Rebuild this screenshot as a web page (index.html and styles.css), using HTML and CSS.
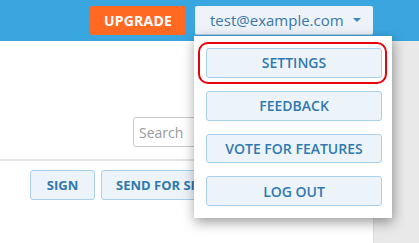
FILE: index.html
```html
<!DOCTYPE html>
<html>
<head>
<meta charset="utf-8">
<link rel="stylesheet" href="styles.css">
</head>
<body>
<header class="topbar">
  <button class="upgrade">UPGRADE</button>
  <button class="account">test@example.com <span class="caret"></span></button>
</header>
<div class="page">
  <main class="content">
    <div class="search-row">
      <input class="search" type="text" placeholder="Search">
    </div>
    <div class="toolbar">
      <button class="btn">SIGN</button>
      <button class="btn">SEND FOR SIGNATURE</button>
    </div>
  </main>
  <aside class="side"></aside>
</div>
<div class="menu">
  <div class="highlight"></div>
  <button class="btn menu-btn">SETTINGS</button>
  <button class="btn menu-btn">FEEDBACK</button>
  <button class="btn menu-btn">VOTE FOR FEATURES</button>
  <button class="btn menu-btn">LOG OUT</button>
</div>
</body>
</html>
```
FILE: styles.css
```css
* { box-sizing: border-box; }
html, body { margin: 0; padding: 0; }
body {
  width: 419px;
  height: 243px;
  overflow: hidden;
  background: #fff;
  font-family: "Open Sans", "Noto Sans", sans-serif;
  position: relative;
}
button { font-family: inherit; cursor: pointer; }

.topbar {
  height: 41px;
  background: #3aa6e0;
  display: flex;
  align-items: flex-start;
  justify-content: flex-end;
  padding: 6px 46px 0 0;
  gap: 9px;
}
.upgrade {
  width: 96px;
  height: 29px;
  background: #ff6922;
  color: #fff;
  border: none;
  border-radius: 2px;
  font-size: 14px;
  font-weight: 700;
  letter-spacing: 0.2px;
  padding: 0;
}
.account {
  width: 178px;
  height: 29px;
  background: #edf3f8;
  border: none;
  border-bottom: 1px solid #b9cfe0;
  border-radius: 2px;
  color: #3a76a8;
  font-size: 15px;
  text-align: left;
  padding: 0 0 0 15px;
  display: flex;
  align-items: center;
}
.caret {
  margin-left: auto;
  margin-right: 12px;
  width: 0;
  height: 0;
  border-left: 4px solid transparent;
  border-right: 4px solid transparent;
  border-top: 4px solid #3a86c4;
}

.page {
  display: flex;
  height: 202px;
}
.content {
  width: 373px;
  flex: none;
}
.side {
  flex: 1;
  background: #e9e9e9;
  border-left: 1px solid #dcdcdc;
}
.search-row {
  padding: 76px 0 0 133px;
  height: 120px;
  border-bottom: 2px solid #e4e4e4;
}
.search {
  width: 200px;
  height: 30px;
  border: 1px solid #c8c8c8;
  border-radius: 3px;
  padding: 0 5px;
  font-family: inherit;
  font-size: 14px;
  color: #555;
}
.search::placeholder { color: #9a9a9a; }
.toolbar {
  display: flex;
  gap: 6px;
  padding: 9px 0 0 30px;
}
.btn {
  height: 30px;
  background: #edf4f9;
  border: 1px solid #a9d0ec;
  border-radius: 3px;
  color: #3079b0;
  font-size: 13px;
  font-weight: 700;
  padding: 0 14px;
  white-space: nowrap;
}
.toolbar .btn:first-child { width: 65px; padding: 0; }

.menu {
  position: absolute;
  top: 36px;
  left: 194px;
  width: 198px;
  height: 182px;
  background: #fff;
  box-shadow: 1px 4px 12px rgba(0, 0, 0, 0.4);
  display: flex;
  flex-direction: column;
  gap: 13px;
  padding: 12px 10px 12px 12px;
}
.menu-btn { width: 176px; padding: 0; font-size: 14px; font-weight: 600; }
.highlight {
  position: absolute;
  left: 4px;
  top: 6px;
  width: 189px;
  height: 42px;
  border: 2px solid #e8000b;
  border-radius: 10px;
}
```
